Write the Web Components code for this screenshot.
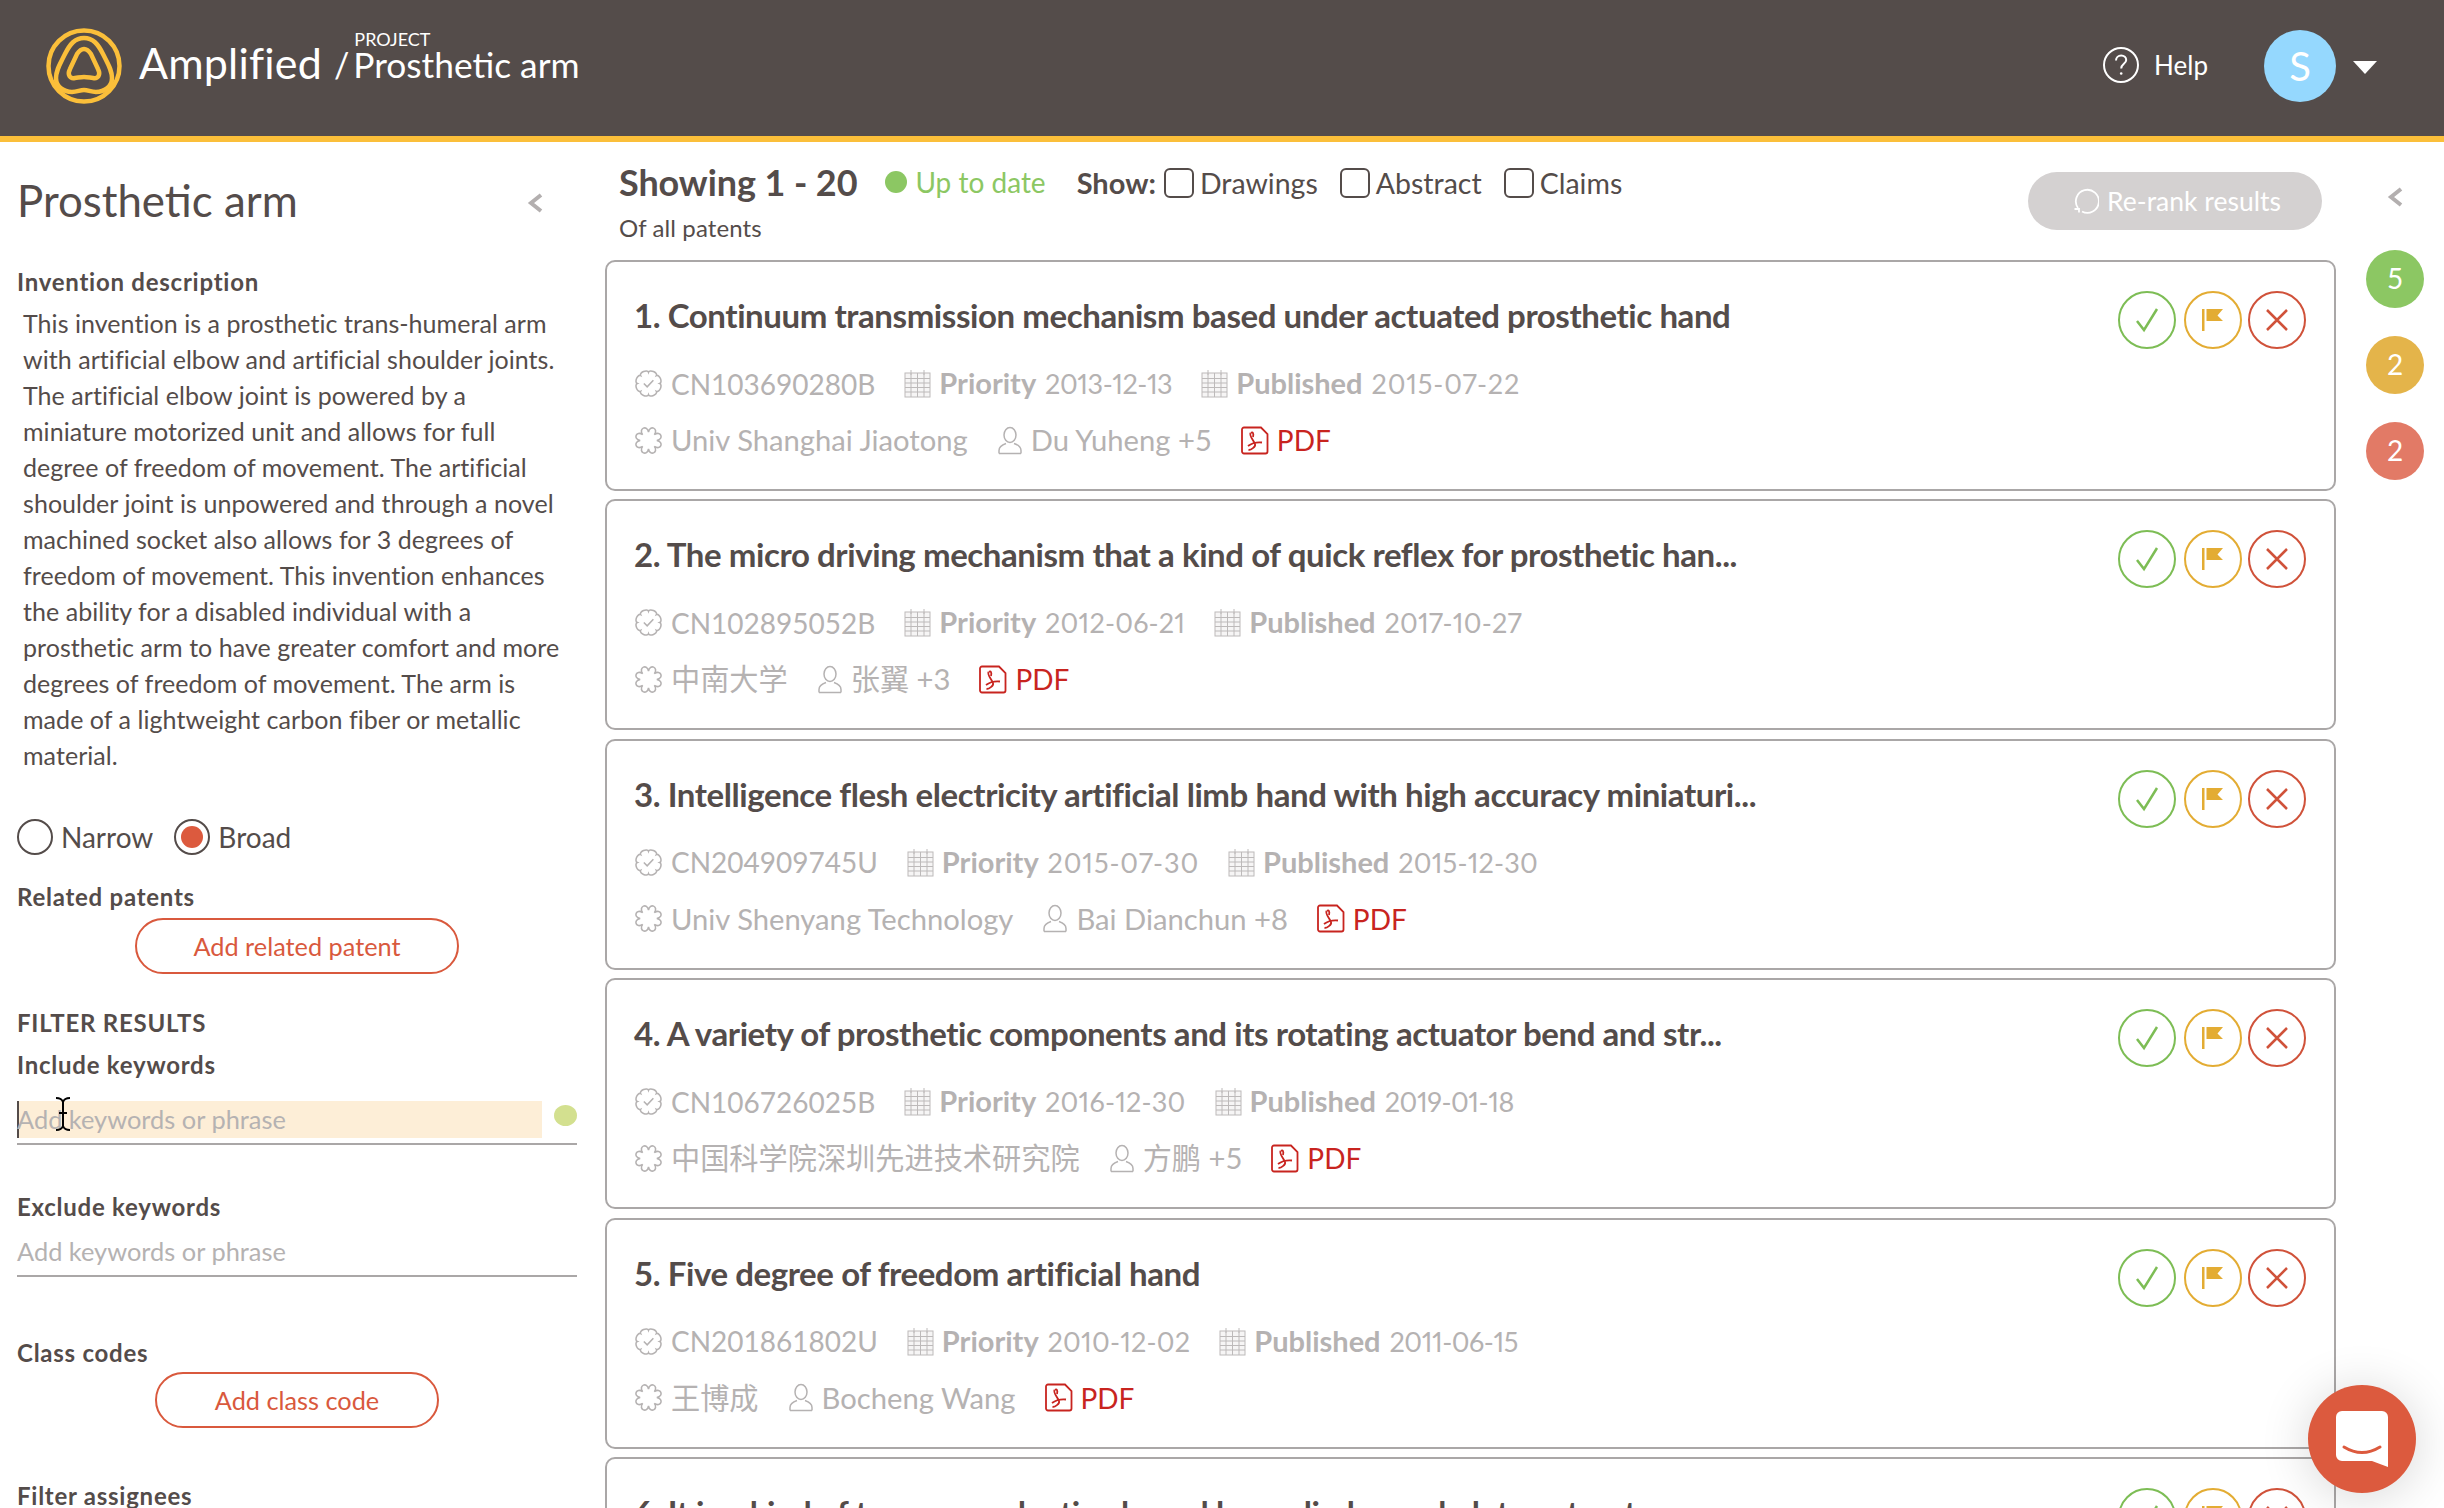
<!DOCTYPE html>
<html lang="en">
<head>
<meta charset="utf-8">
<title>Amplified / Prosthetic arm</title>
<style>
html, body { margin: 0; height: 1508px; overflow: hidden; background: #fff; }
body { font-family: Lato, "Noto Sans CJK SC", sans-serif; color: #544c4a; }
</style>
</head>
<body>
<amp-app></amp-app>

<script>
const FONT = 'Lato, "Noto Sans CJK SC", sans-serif';

// lobed outline used for the patent and assignee icons
function lobes(n, inner, ctrl) {
  const pt = (turn, r) => {
    const a = (turn / n) * Math.PI * 2 - Math.PI / 2;
    return `${(14 + r * Math.cos(a)).toFixed(2)} ${(14 + r * Math.sin(a)).toFixed(2)}`;
  };
  let d = `M${pt(0, inner)}`;
  for (let i = 0; i < n; i++) {
    d += `C${pt(i + 0.1, ctrl)} ${pt(i + 0.9, ctrl)} ${pt(i + 1, inner)}`;
  }
  return d + 'Z';
}

// the installed font has wide ones, so tighten dates by how many they hold
function dateHtml(date) {
  const ones = date.split('1').length - 1;
  return `<span style="letter-spacing:${(1.5 - 0.65 * ones).toFixed(2)}px">${date}</span>`;
}

const ICONS = {
  badge: `<svg width="29" height="29" viewBox="0 0 28 28" fill="none" stroke="#b5b2b2" stroke-width="1.5"><path d="${lobes(8, 10.8, 14)}"/><path d="M9.500 14l3.200 3.200 6-6.400"/></svg>`,
  flower: `<svg width="29" height="29" viewBox="0 0 28 28" fill="none" stroke="#b5b2b2" stroke-width="1.5"><path d="${lobes(8, 8, 15.5)}"/></svg>`,
  calendar: `<svg width="27" height="29" viewBox="0 0 27 29" fill="none" stroke="#bdbaba" stroke-width="1"><rect x="1" y="4" width="25" height="24" fill="#f6f5f5"/><path d="M1 9.500h25M1 14h25M1 18.500h25M1 23h25M7 4v24M13.500 4v24M20 4v24M7 1v5M20 1v5"/></svg>`,
  person: `<svg width="26" height="29" viewBox="0 0 26 29" fill="none" stroke="#b5b2b2" stroke-width="1.5"><ellipse cx="13" cy="9" rx="6" ry="7.500"/><path d="M2 27.500v-3c0-4 4-6 7-7M24 27.500v-3c0-4-4-6-7-7M2 27.500h22"/></svg>`,
  pdf: `<svg width="28" height="29" viewBox="0 0 28 29" fill="none" stroke="#c8241f" stroke-width="1.800"><path d="M3 1.500h17l6.500 6.500v17.500a2 2 0 0 1-2 2H3a2 2 0 0 1-2-2v-22a2 2 0 0 1 2-2z"/><path d="M9.500 7c-1.500 3 3 7 4.500 11 1 2.500-3.500 6-6.500 6M7 20c4-3 9-4 14-3.500 M10 7c1.500-1.500 3 0 2 4"/></svg>`,
  chevron: `<svg width="16" height="20" viewBox="0 0 16 20" fill="none" stroke="#b3afaf" stroke-width="4"><path d="M14 2L4 10l10 8"/></svg>`
};

function define(name, markup, setup) {
  const template = document.createElement('template');
  template.innerHTML = markup;
  class El extends HTMLElement {
    constructor() {
      super();
      this.attachShadow({ mode: 'open' });
      this.shadowRoot.appendChild(template.content.cloneNode(true));
    }
    connectedCallback() {
      if (setup) setup(this, this.shadowRoot);
    }
  }
  if (!window.customElements.get(name)) window.customElements.define(name, El);
}

define('amp-header', `
<style>
:host { display: flex; align-items: center; height: 132px; padding-bottom: 4px; background: #544c4a; border-bottom: 6px solid #fbbf3a; color: #fff; font-family: ${FONT}; }
.logo { margin-left: 46px; margin-right: 17px; display: block; }
.brand { font-size: 43px; line-height: 56px; margin-top: -6px; letter-spacing: .2px; }
.slash { font-size: 34px; margin: 0 4px 0 12px; line-height: 56px; margin-top: -2px; }
.project { display: flex; flex-direction: column; margin-top: -19px; }
.project small { font-size: 18px; line-height: 16px; margin-left: 1px; }
.project span { font-size: 35.300px; line-height: 36px; }
.spacer { flex: 1; }
.help { display: flex; align-items: center; gap: 15px; font-size: 26px; margin-top: -2px; }
.avatar { width: 72px; height: 72px; border-radius: 50%; background: #95d8fe; display: flex; align-items: center; justify-content: center; font-size: 40px; margin-left: 56px; }
.caret { margin: 2px 67px 0 17px; width: 0; height: 0; border: 12px solid transparent; border-top: 13px solid #fff; border-bottom: 0; }
</style>
<svg class="logo" width="76" height="76" viewBox="0 0 76 76" fill="none" stroke="#fbbf3a" stroke-width="4.500">
  <circle cx="38" cy="38" r="35.500"/>
  <path d="M38 10C47 10 52 16 57 26C62 36 66 42 66 50C66 59 58 64 50 64C45 64 42 62 38 62C34 62 31 64 26 64C18 64 10 59 10 50C10 42 14 36 19 26C24 16 29 10 38 10Z"/>
  <path d="M38 21C41 21 43 23 45 26L52 41C55 47 52 51 47 50C43 49.500 41 49 38 49C35 49 33 49.500 29 50C24 51 21 47 24 41L31 26C33 23 35 21 38 21Z"/>
</svg>
<span class="brand">Amplified</span><span class="slash">/</span>
<div class="project"><small>PROJECT</small><span>Prosthetic arm</span></div>
<div class="spacer"></div>
<div class="help">
  <svg width="36" height="36" viewBox="0 0 36 36" fill="none" stroke="#fff" stroke-width="2"><circle cx="18" cy="18" r="17"/><path d="M13 13.500c0-3 2.300-5 5.200-5s5 1.900 5 4.500c0 3.800-5 4-5 8.500"/><circle cx="18.200" cy="26.500" r="1.300" fill="#fff" stroke="none"/></svg>
  <span>Help</span>
</div>
<div class="avatar">S</div>
<div class="caret"></div>
`);

define('side-label', `
<style>
:host { display: block; font-family: ${FONT}; font-weight: 700; font-size: 24px; line-height: 30px; letter-spacing: .75px; color: #544c4a; }
</style>
<slot></slot>
`);

define('pill-button', `
<style>
:host { display: flex; justify-content: center; }
span { display: flex; align-items: center; justify-content: center; height: 52px; border: 2px solid #d9593d; border-radius: 28px; color: #d9593d; font-family: ${FONT}; font-size: 25.300px; width: var(--pill-width, 320px); }
</style>
<span><slot></slot></span>
`);

define('keyword-input', `
<style>
:host { display: block; font-family: ${FONT}; font-size: 25.400px; color: #b5b2b2; border-bottom: 2px solid #aaa7a7; padding-bottom: 5px; position: relative; }
.row { display: flex; align-items: center; height: 37px; }
.field { flex: 0 0 525px; height: 37px; line-height: 37px; }
:host([focused]) .field { background: #fdeed7; box-shadow: inset 2px 0 0 #544c4a; }
.dot { display: none; width: 23px; height: 21px; border-radius: 50%; background: #d3e08f; margin-left: 12px; margin-top: -8px; }
:host([focused]) .dot { display: block; }
.cursor { display: none; position: absolute; left: 38px; top: -4px; }
:host([focused]) .cursor { display: block; }
</style>
<div class="row"><div class="field"><slot></slot></div><div class="dot"></div></div>
<svg class="cursor" width="16" height="34" viewBox="0 0 16 34" fill="none" stroke="#000" stroke-width="2"><path d="M1 1c4 0 6 1 7 4 1-3 3-4 7-4M8 5v24M1 33c4 0 6-1 7-4 1 3 3 4 7 4M4 16h8"/></svg>
`);

define('amp-sidebar', `
<style>
:host { display: block; width: 605px; flex: none; box-sizing: border-box; padding: 28px 0 0 17px; font-family: ${FONT}; color: #544c4a; overflow: hidden; }
.top { display: flex; justify-content: space-between; align-items: center; height: 60px; padding-right: 62px; }
h1 { margin: 0; font-size: 43.800px; font-weight: 400; line-height: 60px; }
.top svg { margin-top: 6px; }
p { margin: 8px 0 0 6px; font-size: 25px; letter-spacing: .05px; line-height: 36px; white-space: nowrap; }
.scope { display: flex; align-items: center; height: 36px; margin-top: 46px; font-size: 28px; }
.radio { width: 32px; height: 32px; border: 2px solid #544c4a; border-radius: 50%; margin-right: 8px; position: relative; }
.radio.on::after { content: ""; position: absolute; inset: 5px; border-radius: 50%; background: #dc5a3e; }
.broad { margin-left: 21px; }
side-label, pill-button, keyword-input { width: 560px; }
.l1 { margin-top: 37px; }
.l2 { margin-top: 27px; }
.b1 { margin-top: 6px; }
.l3 { margin-top: 34px; }
.l4 { margin-top: 12px; }
.k1 { margin-top: 21px; }
.l5 { margin-top: 47px; }
.k2 { margin-top: 11px; }
.l6 { margin-top: 61px; }
.b2 { margin-top: 4px; }
.l7 { margin-top: 53px; }
</style>
<div class="top"><h1>Prosthetic arm</h1>${ICONS.chevron}</div>
<side-label class="l1">Invention description</side-label>
<p>This invention is a prosthetic trans-humeral arm<br>with artificial elbow and artificial shoulder joints.<br>The artificial elbow joint is powered by a<br>miniature motorized unit and allows for full<br>degree of freedom of movement. The artificial<br>shoulder joint is unpowered and through a novel<br>machined socket also allows for 3 degrees of<br>freedom of movement. This invention enhances<br>the ability for a disabled individual with a<br>prosthetic arm to have greater comfort and more<br>degrees of freedom of movement. The arm is<br>made of a lightweight carbon fiber or metallic<br>material.</p>
<div class="scope">
  <div class="radio"></div><span>Narrow</span>
  <div class="radio on broad"></div><span>Broad</span>
</div>
<side-label class="l2">Related patents</side-label>
<pill-button class="b1" style="--pill-width:320px">Add related patent</pill-button>
<side-label class="l3">FILTER RESULTS</side-label>
<side-label class="l4">Include keywords</side-label>
<keyword-input class="k1" focused>Add keywords or phrase</keyword-input>
<side-label class="l5">Exclude keywords</side-label>
<keyword-input class="k2">Add keywords or phrase</keyword-input>
<side-label class="l6">Class codes</side-label>
<pill-button class="b2" style="--pill-width:280px">Add class code</pill-button>
<side-label class="l7">Filter assignees</side-label>
`);

define('meta-item', `
<style>
:host { display: inline-flex; align-items: center; gap: 8px; color: #b5b2b2; font-family: ${FONT}; font-size: 29.200px; line-height: 36px; white-space: nowrap; }
:host([icon="pdf"]) { color: #c8241f; font-size: 28px; }
:host([icon="badge"]) { font-size: 28px; }
:host([icon="calendar"]) { font-size: 27px; font-variant-numeric: proportional-nums; }
#icon { display: flex; }
::slotted(b) { font-size: 29px; font-weight: 700; margin-right: 2px; }
</style>
<span id="icon"></span><span><slot></slot></span>
`, (el, root) => {
  root.getElementById('icon').innerHTML = ICONS[el.getAttribute('icon')];
});

define('review-actions', `
<style>
:host { display: flex; flex: none; }
div { width: 54px; height: 54px; border: 2px solid; border-radius: 50%; display: flex; align-items: center; justify-content: center; }
.yes { border-color: #7dbd55; }
.flag { border-color: #e3ac33; margin-left: 8px; }
.no { border-color: #d0523a; margin-left: 6px; }
</style>
<div class="yes"><svg width="26" height="26" viewBox="0 0 26 26" fill="none" stroke="#7dbd55" stroke-width="2.500"><path d="M3 14l7 9L23 2"/></svg></div>
<div class="flag"><svg width="22" height="24" viewBox="0 0 22 24"><path fill="#e3ac33" d="M0 1h2.500v22H0zM4.500 1H21l-5.500 6.500L21 13H4.500z"/></svg></div>
<div class="no"><svg width="24" height="24" viewBox="0 0 24 24" fill="none" stroke="#d0523a" stroke-width="2.500"><path d="M2 2l20 20M22 2L2 22"/></svg></div>
`);

define('patent-card', `
<style>
:host { display: flex; justify-content: space-between; box-sizing: border-box; height: 231px; flex: none; border: 2px solid #aaa7a7; border-radius: 10px; padding: 29px 28px 0 27px; font-family: ${FONT}; background: #fff; }
h2 { margin: 2px 0 0; font-size: 33px; letter-spacing: -.42px; font-weight: 700; line-height: 44px; color: #544c4a; white-space: nowrap; }
.row { display: flex; gap: 29px; }
.r1 { margin-top: 28px; }
.r2 { margin-top: 20px; }
</style>
<div>
  <h2><slot></slot></h2>
  <div class="row r1">
    <meta-item icon="badge" id="num"></meta-item>
    <meta-item icon="calendar" id="prio"></meta-item>
    <meta-item icon="calendar" id="pub"></meta-item>
  </div>
  <div class="row r2">
    <meta-item icon="flower" id="owner"></meta-item>
    <meta-item icon="person" id="inv"></meta-item>
    <meta-item icon="pdf">PDF</meta-item>
  </div>
</div>
<review-actions></review-actions>
`, (el, root) => {
  const fill = (id, html) => { root.getElementById(id).innerHTML = html; };
  fill('num', el.getAttribute('number'));
  fill('prio', `<b>Priority</b> ${dateHtml(el.getAttribute('priority'))}`);
  fill('pub', `<b>Published</b> ${dateHtml(el.getAttribute('published'))}`);
  fill('owner', el.getAttribute('owner'));
  fill('inv', el.getAttribute('inventor'));
});

define('check-option', `
<style>
:host { display: inline-flex; align-items: center; gap: 6px; font-family: ${FONT}; font-size: 28.500px; color: #544c4a; }
i { width: 26px; height: 26px; border: 2px solid #544c4a; border-radius: 6px; display: block; }
</style>
<i></i><slot></slot>
`);

define('amp-results', `
<style>
:host { display: block; flex: 1; min-width: 0; font-family: ${FONT}; color: #544c4a; overflow: hidden; }
.head { display: flex; justify-content: space-between; height: 118px; box-sizing: border-box; padding: 18px 14px 0 14px; }
.line { display: flex; align-items: center; height: 44px; }
.showing { font-size: 36px; font-weight: 700; letter-spacing: -.1px; }
.status { display: flex; align-items: center; gap: 8px; color: #8cc763; font-size: 28px; margin-left: 28px; }
.status i { width: 22px; height: 22px; border-radius: 50%; background: #8cc763; }
.show { font-size: 29px; font-weight: 700; margin-left: 31px; margin-right: 8px; }
check-option { margin-top: 1px; }
check-option + check-option { margin-left: 22px; }
.of { font-size: 24px; line-height: 32px; margin-top: 8px; letter-spacing: .1px; }
.rerank { margin-top: 12px; width: 290px; padding-left: 4px; height: 58px; border-radius: 29px; background: #d4d1d1; color: #fff; font-size: 26.500px; display: flex; align-items: center; justify-content: center; gap: 8px; }
.list { display: flex; flex-direction: column; gap: 8.400px; }
</style>
<div class="head">
  <div>
    <div class="line">
      <span class="showing">Showing 1 - 20</span>
      <span class="status"><i></i>Up to date</span>
      <span class="show">Show:</span>
      <check-option>Drawings</check-option>
      <check-option>Abstract</check-option>
      <check-option>Claims</check-option>
    </div>
    <div class="of">Of all patents</div>
  </div>
  <div class="rerank">
    <svg width="26" height="26" viewBox="0 0 26 26" fill="none" stroke="#fff" stroke-width="1.800"><path d="M5 20A11.500 11.500 0 1 1 9 23.500M1.500 21H6v3.500"/></svg>
    Re-rank results
  </div>
</div>
<div class="list"><slot></slot></div>
`);

define('amp-rail', `
<style>
:host { display: flex; flex-direction: column; width: 108px; flex: none; box-sizing: border-box; padding: 45px 0 0 30px; font-family: ${FONT}; }
svg { margin: 0 0 43px 21px; }
div { width: 58px; height: 58px; border-radius: 50%; color: #fff; font-size: 28px; display: flex; align-items: center; justify-content: center; margin-bottom: 28px; padding-bottom: 2px; box-sizing: border-box; }
</style>
${ICONS.chevron}
<div style="background:#8cc763">5</div>
<div style="background:#e4b44a">2</div>
<div style="background:#e27a66">2</div>
`);

define('chat-fab', `
<style>
:host { position: fixed; left: 2308px; top: 1385px; width: 108px; height: 108px; border-radius: 50%; background: #dc5a3e; box-shadow: 0 4px 50px rgba(0,0,0,.16); display: flex; align-items: center; justify-content: center; }
</style>
<svg width="52" height="56" viewBox="0 0 52 56"><path fill="#fff" d="M6 0H46a6 6 0 0 1 6 6V56L36 50H6a6 6 0 0 1-6-6V6a6 6 0 0 1 6-6Z"/><path fill="none" stroke="#dc5a3e" stroke-width="3" stroke-linecap="round" d="M8 36Q26 47 44 36"/></svg>
`);

define('amp-app', `
<style>
:host { display: block; height: 1508px; overflow: hidden; }
.body { display: flex; height: 1366px; overflow: hidden; }
</style>
<amp-header></amp-header>
<div class="body">
  <amp-sidebar></amp-sidebar>
  <amp-results>
    <patent-card number="CN103690280B" priority="2013-12-13" published="2015-07-22" owner="Univ Shanghai Jiaotong" inventor="Du Yuheng +5">1. Continuum transmission mechanism based under actuated prosthetic hand</patent-card>
    <patent-card number="CN102895052B" priority="2012-06-21" published="2017-10-27" owner="中南大学" inventor="张翼 +3">2. The micro driving mechanism that a kind of quick reflex for prosthetic han...</patent-card>
    <patent-card number="CN204909745U" priority="2015-07-30" published="2015-12-30" owner="Univ Shenyang Technology" inventor="Bai Dianchun +8">3. Intelligence flesh electricity artificial limb hand with high accuracy miniaturi...</patent-card>
    <patent-card number="CN106726025B" priority="2016-12-30" published="2019-01-18" owner="中国科学院深圳先进技术研究院" inventor="方鹏 +5">4. A variety of prosthetic components and its rotating actuator bend and str...</patent-card>
    <patent-card number="CN201861802U" priority="2010-12-02" published="2011-06-15" owner="王博成" inventor="Bocheng Wang">5. Five degree of freedom artificial hand</patent-card>
    <patent-card number="CN105943211B" priority="2016-05-11" published="2018-02-09" owner="Univ Shanghai Jiaotong" inventor="Li Wei +3">6. It is a kind of to merge adaptive knead lower limb exoskeleton structure a...</patent-card>
  </amp-results>
  <amp-rail></amp-rail>
</div>
<chat-fab></chat-fab>
`);
</script>
</body>
</html>
